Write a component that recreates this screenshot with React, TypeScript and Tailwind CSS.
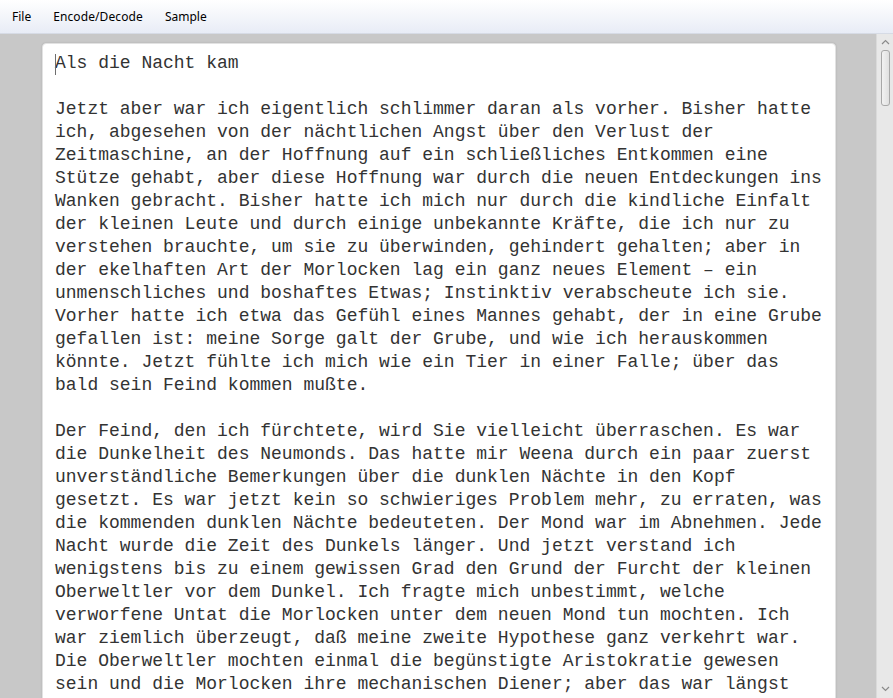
import React from "react";

const lines = [
  "Als die Nacht kam",
  "",
  "Jetzt aber war ich eigentlich schlimmer daran als vorher. Bisher hatte",
  "ich, abgesehen von der nächtlichen Angst über den Verlust der",
  "Zeitmaschine, an der Hoffnung auf ein schließliches Entkommen eine",
  "Stütze gehabt, aber diese Hoffnung war durch die neuen Entdeckungen ins",
  "Wanken gebracht. Bisher hatte ich mich nur durch die kindliche Einfalt",
  "der kleinen Leute und durch einige unbekannte Kräfte, die ich nur zu",
  "verstehen brauchte, um sie zu überwinden, gehindert gehalten; aber in",
  "der ekelhaften Art der Morlocken lag ein ganz neues Element – ein",
  "unmenschliches und boshaftes Etwas; Instinktiv verabscheute ich sie.",
  "Vorher hatte ich etwa das Gefühl eines Mannes gehabt, der in eine Grube",
  "gefallen ist: meine Sorge galt der Grube, und wie ich herauskommen",
  "könnte. Jetzt fühlte ich mich wie ein Tier in einer Falle; über das",
  "bald sein Feind kommen mußte.",
  "",
  "Der Feind, den ich fürchtete, wird Sie vielleicht überraschen. Es war",
  "die Dunkelheit des Neumonds. Das hatte mir Weena durch ein paar zuerst",
  "unverständliche Bemerkungen über die dunklen Nächte in den Kopf",
  "gesetzt. Es war jetzt kein so schwieriges Problem mehr, zu erraten, was",
  "die kommenden dunklen Nächte bedeuteten. Der Mond war im Abnehmen. Jede",
  "Nacht wurde die Zeit des Dunkels länger. Und jetzt verstand ich",
  "wenigstens bis zu einem gewissen Grad den Grund der Furcht der kleinen",
  "Oberweltler vor dem Dunkel. Ich fragte mich unbestimmt, welche",
  "verworfene Untat die Morlocken unter dem neuen Mond tun mochten. Ich",
  "war ziemlich überzeugt, daß meine zweite Hypothese ganz verkehrt war.",
  "Die Oberweltler mochten einmal die begünstigte Aristokratie gewesen",
  "sein und die Morlocken ihre mechanischen Diener; aber das war längst",
];

export default function App() {
  return (
    <div className="w-[893px] h-[698px] overflow-hidden flex flex-col bg-[#c8c8c8]">
      <div
        className="h-[34px] shrink-0 flex items-center gap-[22px] pl-[12px] text-[12px] text-black bg-gradient-to-b from-[#ffffff] to-[#e8ecf6] border-b border-[#d6dbe5]"
        style={{ fontFamily: '"Noto Sans", "Open Sans", sans-serif' }}
      >
        <span>File</span>
        <span className="tracking-[0.1px]">Encode/Decode</span>
        <span>Sample</span>
      </div>
      <div className="flex flex-1 min-h-0">
        <div className="flex-1 min-w-0 pl-[42px] pr-[40px] pt-[9px] overflow-hidden">
          <div className="relative bg-white rounded-t-[4px] border border-[#e2e2e2] shadow-[0_0_2px_rgba(0,0,0,0.15)] pl-[12px] pt-[8px] h-[700px]">
            <div className="absolute left-[12px] top-[10px] w-[1px] h-[21px] bg-[#6e6e6e]" />
            <div
              className="text-[18px] leading-[23px] text-[#333333] whitespace-pre"
              style={{ fontFamily: '"Liberation Mono", "Courier New", monospace' }}
            >
              {lines.map((l, i) => (
                <div key={i} className="h-[23px]">
                  {l}
                </div>
              ))}
            </div>
          </div>
        </div>
        <div className="w-[17px] shrink-0 bg-[#e8e8e8] border-l border-[#dadada] flex flex-col items-center">
          <svg width="9" height="6" viewBox="0 0 9 6" className="mt-[5px]">
            <path d="M1 5 L4.5 1.5 L8 5" stroke="#8a8a8a" strokeWidth="1.2" fill="none" />
          </svg>
          <div className="mt-[5px] w-[9px] h-[56px] rounded-[3px] border border-[#a8a8a8] bg-gradient-to-r from-[#f2f2f2] to-[#e0e0e0]" />
          <div className="flex-1" />
          <svg width="9" height="6" viewBox="0 0 9 6" className="mb-[6px]">
            <path d="M1 1 L4.5 4.5 L8 1" stroke="#8a8a8a" strokeWidth="1.2" fill="none" />
          </svg>
        </div>
      </div>
    </div>
  );
}
